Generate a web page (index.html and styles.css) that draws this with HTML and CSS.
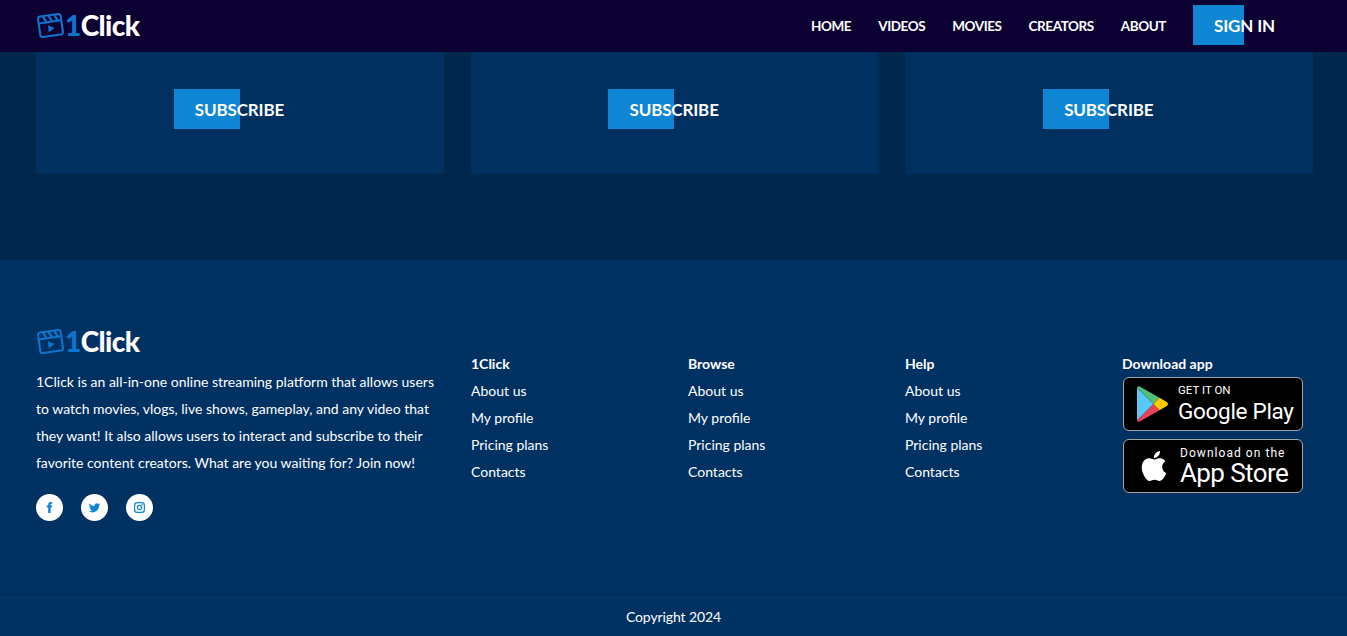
FILE: index.html
```html
<!DOCTYPE html>
<html lang="en">
<head>
<meta charset="utf-8">
<title>1Click</title>
<link rel="stylesheet" href="styles.css">
</head>
<body>
<header class="topbar">
  <a class="logo" href="#">
    <svg class="logo-icon" viewBox="0 0 26 26"><g transform="rotate(-8 13 13)" fill="none" stroke="#0d75cc" stroke-width="2"><rect x="2" y="3" width="22" height="20" rx="2.5"/><path d="M2 9.5h22"/><path d="M7 3.5l2.5 5.5M12.5 3.5l2.5 5.5M18 3.5l2.5 5.5" stroke-width="2.2"/><path d="M10.5 12.5l6 3.5-6 3.5z" fill="#0d75cc" stroke="none"/></g></svg>
    <span class="logo-text"><span class="logo-one">1</span>Click</span>
  </a>
  <nav class="nav">
    <a href="#">HOME</a>
    <a href="#">VIDEOS</a>
    <a href="#">MOVIES</a>
    <a href="#">CREATORS</a>
    <a href="#">ABOUT</a>
  </nav>
  <a class="btn btn-signin" href="#">SIGN IN</a>
</header>

<section class="plans">
  <div class="card"><div class="btn-slot"><a class="btn" href="#">SUBSCRIBE</a></div></div>
  <div class="card"><div class="btn-slot"><a class="btn" href="#">SUBSCRIBE</a></div></div>
  <div class="card"><div class="btn-slot"><a class="btn" href="#">SUBSCRIBE</a></div></div>
</section>

<footer class="footer">
  <div class="footer-grid">
    <div class="about">
      <a class="logo" href="#">
        <svg class="logo-icon" viewBox="0 0 26 26"><g transform="rotate(-8 13 13)" fill="none" stroke="#0d75cc" stroke-width="2"><rect x="2" y="3" width="22" height="20" rx="2.5"/><path d="M2 9.5h22"/><path d="M7 3.5l2.5 5.5M12.5 3.5l2.5 5.5M18 3.5l2.5 5.5" stroke-width="2.2"/><path d="M10.5 12.5l6 3.5-6 3.5z" fill="#0d75cc" stroke="none"/></g></svg>
        <span class="logo-text"><span class="logo-one">1</span>Click</span>
      </a>
      <p class="about-text">1Click is an all-in-one online streaming platform that allows users<br>to watch movies, vlogs, live shows, gameplay, and any video that<br>they want! It also allows users to interact and subscribe to their<br>favorite content creators. What are you waiting for? Join now!</p>
      <div class="socials">
        <a class="social" href="#"><svg viewBox="0 0 24 24" class="social-icon"><path fill="#0e86d4" d="M14 8.5V6.6c0-.9.3-1.3 1.3-1.3H17V2h-2.9C11 2 9.6 3.8 9.6 6.3v2.2H7V12h2.6v10H14V12h2.6l.4-3.5z"/></svg></a>
        <a class="social" href="#"><svg viewBox="0 0 24 24" class="social-icon"><path fill="#0e86d4" d="M22.46 6c-.77.35-1.6.58-2.46.69.88-.53 1.56-1.37 1.88-2.38-.83.5-1.75.85-2.72 1.05C18.37 4.5 17.26 4 16 4c-2.35 0-4.27 1.92-4.27 4.29 0 .34.04.67.11.98C8.28 9.09 5.11 7.38 3 4.79c-.37.63-.58 1.37-.58 2.15 0 1.49.75 2.81 1.91 3.56-.71 0-1.37-.2-1.95-.5v.03c0 2.08 1.48 3.82 3.44 4.21a4.22 4.22 0 0 1-1.93.07 4.28 4.28 0 0 0 4 2.98 8.521 8.521 0 0 1-5.33 1.84c-.34 0-.68-.02-1.02-.06C3.44 20.29 5.7 21 8.12 21 16 21 20.33 14.46 20.33 8.79c0-.19 0-.37-.01-.56.84-.6 1.56-1.36 2.14-2.23z"/></svg></a>
        <a class="social" href="#"><svg viewBox="0 0 24 24" class="social-icon"><g fill="none" stroke="#0e86d4" stroke-width="2.2"><rect x="3" y="3" width="18" height="18" rx="5"/><circle cx="12" cy="12" r="4"/></g><circle cx="17" cy="7" r="1.3" fill="#0e86d4"/></svg></a>
      </div>
    </div>
    <div class="links">
      <h4>1Click</h4>
      <a href="#">About us</a><a href="#">My profile</a><a href="#">Pricing plans</a><a href="#">Contacts</a>
    </div>
    <div class="links">
      <h4>Browse</h4>
      <a href="#">About us</a><a href="#">My profile</a><a href="#">Pricing plans</a><a href="#">Contacts</a>
    </div>
    <div class="links">
      <h4>Help</h4>
      <a href="#">About us</a><a href="#">My profile</a><a href="#">Pricing plans</a><a href="#">Contacts</a>
    </div>
    <div class="links">
      <h4>Download app</h4>
      <a class="badge" href="#">
        <svg class="play-icon" viewBox="0 0 31 36">
          <path d="M0 1.5V34.5L16.5 18z" fill="#5ac8fa"/>
          <path d="M0 1.2c.5-1 1.5-1.4 2.7-.7L22.5 11.8 16.5 18z" fill="#4fbf7a"/>
          <path d="M0 34.8c.5 1 1.5 1.4 2.7.7L22.5 24.2 16.5 18z" fill="#ea4258"/>
          <path d="M22.5 11.8l7.3 4.2c1.6.9 1.6 3.1 0 4l-7.3 4.2-6-6.2z" fill="#fdc902"/>
        </svg>
        <span class="badge-text"><span class="play-small">GET IT ON</span><span class="play-big">Google Play</span></span>
      </a>
      <a class="badge badge-apple" href="#">
        <svg class="apple-icon" viewBox="0 0 24 24"><path fill="#fff" d="M12.152 6.896c-.948 0-2.415-1.078-3.96-1.04-2.04.027-3.91 1.183-4.961 3.014-2.117 3.675-.546 9.103 1.519 12.09 1.013 1.454 2.208 3.09 3.792 3.039 1.52-.065 2.09-.987 3.935-.987 1.831 0 2.35.987 3.96.948 1.637-.026 2.676-1.48 3.676-2.948 1.156-1.688 1.636-3.325 1.662-3.415-.039-.013-3.182-1.221-3.22-4.857-.026-3.04 2.48-4.494 2.597-4.559-1.429-2.09-3.623-2.324-4.39-2.376-2-.156-3.675 1.09-4.61 1.09zM15.53 3.83c.843-1.012 1.4-2.427 1.245-3.83-1.207.052-2.662.805-3.532 1.818-.78.896-1.454 2.338-1.273 3.714 1.338.104 2.715-.688 3.559-1.701"/></svg>
        <span class="badge-text"><span class="apple-small">Download on the</span><span class="apple-big">App Store</span></span>
      </a>
    </div>
  </div>
  <div class="copyright">Copyright 2024</div>
</footer>
</body>
</html>
```
FILE: styles.css
```css
* { box-sizing: border-box; }
html, body { margin: 0; padding: 0; height: 636px; overflow: hidden; }
body {
  background: #00284c;
  color: #fff;
  font-family: "Lato", "Noto Sans", sans-serif;
  font-size: 14px;
}
a { color: inherit; text-decoration: none; }

.topbar {
  height: 52px;
  background: #0c0033;
  display: flex;
  align-items: flex-start;
  padding: 5px 103px 0 37px;
}
.logo {
  display: flex;
  align-items: center;
  height: 40px;
}
.logo-icon { width: 27px; height: 27px; margin-right: 1px; }
.logo-text {
  font-size: 28px;
  font-weight: 900;
  letter-spacing: -0.6px;
  line-height: 40px;
}
.logo-one { color: #0d75cc; }

.nav {
  margin-left: auto;
  display: flex;
  gap: 27px;
  height: 42px;
  align-items: center;
  font-weight: 700;
  font-size: 13.5px;
  letter-spacing: -0.42px;
}
.btn {
  display: block;
  height: 40px;
  width: 66px;
  padding-left: 21px;
  line-height: 42px;
  background: #0e86d4;
  font-weight: 700;
  font-size: 17px;
  letter-spacing: -0.15px;
  white-space: nowrap;
  color: #fff;
}
.btn-signin { width: 51px; margin-left: 27px; }

.plans {
  display: grid;
  grid-template-columns: repeat(3, 1fr);
  gap: 27px;
  padding: 0 34px 86px 36px;
}
.card {
  height: 122px;
  background: #003060;
  padding-top: 37px;
  display: flex;
  justify-content: center;
}
.btn-slot { width: 132px; }

.footer { background: #003163; height: 376px; }
.footer-grid {
  display: grid;
  grid-template-columns: 435px 217px 217px 217px 1fr;
  padding: 62px 0 0 36px;
  height: 335px;
  border-bottom: 1px solid #00274f;
}
.about .logo { height: 38px; margin-left: 1px; }
.about-text {
  margin: 8px 0 0;
  line-height: 27px;
  white-space: nowrap;
}
.socials { display: flex; gap: 18px; margin-top: 18px; }
.social {
  width: 27px;
  height: 27px;
  border-radius: 50%;
  background: #fff;
  display: flex;
  align-items: center;
  justify-content: center;
}
.social-icon { width: 13px; height: 13px; }

.links { padding-top: 29px; }
.links h4 { margin: 0; font-size: 14px; font-weight: 700; line-height: 26px; }
.links > a { display: block; line-height: 27px; }

.links > a.badge {
  width: 180px;
  height: 54px;
  background: #000;
  border: 1.3px solid #a6a6a6;
  border-radius: 6px;
  display: flex;
  align-items: center;
  margin-left: 1px;
  line-height: 1;
  font-family: "Roboto", sans-serif;
}
.links > a.badge-apple { margin-top: 8px; }
.play-icon { width: 31px; height: 36px; margin-left: 13px; margin-right: 10px; }
.apple-icon { width: 30px; height: 36px; margin-left: 15px; margin-right: 11px; }
.badge-text { display: flex; flex-direction: column; }
.play-small { font-size: 11.5px; line-height: 13px; margin-bottom: 1px; }
.play-big { font-size: 22.5px; line-height: 26px; letter-spacing: -0.3px; }
.apple-small { font-size: 12px; line-height: 14px; letter-spacing: 1.05px; }
.apple-big { font-size: 26px; line-height: 27px; letter-spacing: -0.6px; }

.copyright { text-align: center; line-height: 44px; height: 41px; letter-spacing: -0.1px; }
```
